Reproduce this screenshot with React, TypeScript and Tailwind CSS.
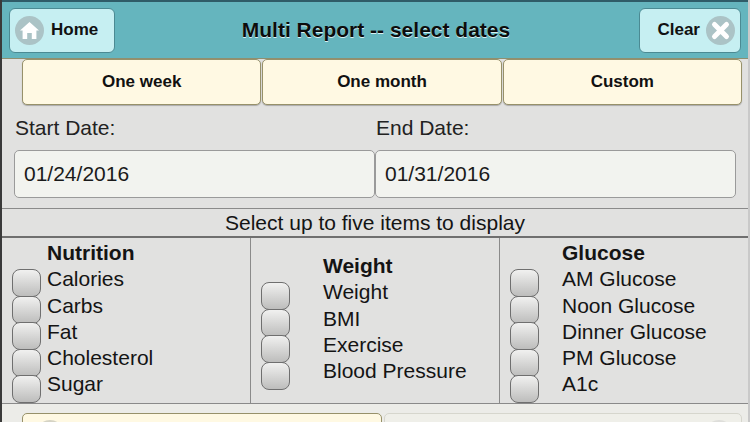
const columns = [
  { title: "Nutrition", items: ["Calories", "Carbs", "Fat", "Cholesterol", "Sugar"], textGap: "ml-[6px]", pad: "pt-[2px]" },
  { title: "Weight", items: ["Weight", "BMI", "Exercise", "Blood Pressure"], textGap: "ml-[33px]", pad: "pt-[15px]" },
  { title: "Glucose", items: ["AM Glucose", "Noon Glucose", "Dinner Glucose", "PM Glucose", "A1c"], textGap: "ml-[23px]", pad: "pt-[2px]" },
];

function HomeIcon() {
  return (
    <svg width="29" height="29" viewBox="0 0 29 29" className="shrink-0">
      <circle cx="14.5" cy="14.5" r="14.5" fill="#abc3c6" />
      <path d="M14.5 6 L24 14.6 L21.4 14.6 L21.4 23 L16.8 23 L16.8 17 L12.2 17 L12.2 23 L7.6 23 L7.6 14.6 L5 14.6 Z" fill="#fff" />
    </svg>
  );
}

function ClearIcon() {
  return (
    <svg width="29" height="29" viewBox="0 0 29 29" className="shrink-0">
      <circle cx="14.5" cy="14.5" r="14.5" fill="#abc3c6" />
      <path d="M8.5 8.5 L20.5 20.5 M20.5 8.5 L8.5 20.5" stroke="#fff" strokeWidth="5" strokeLinecap="round" />
    </svg>
  );
}

function Check() {
  return (
    <div className="-mb-[1.5px] h-[28px] w-[29px] rounded-[8px] border border-[#6f6f6f] bg-gradient-to-b from-[#f1f1f0] to-[#bdbdbc]" />
  );
}

export default function App() {
  return (
    <div className="flex h-[422px] w-[750px] flex-col overflow-hidden border-l-2 border-r-2 border-l-[#3a3a3a] border-r-[#c9c9c9] bg-[#e1e1e0] text-[21px] leading-[26.3px] text-[#141414] [font-family:'Liberation_Sans',Arial,sans-serif]">
      <header className="-mx-[2px] flex h-[59px] shrink-0 items-center justify-between border-t-2 border-b border-t-[#2f5c68] border-b-[#8f8f70] bg-[#65b5be] pl-[9px] pr-[9px]">
        <button className="flex h-[45px] w-[106px] items-center gap-[7px] rounded-[6px] border border-[#4b8a93] bg-[#c6eff2] pl-[5px] text-[17px] font-bold text-[#111]">
          <HomeIcon />
          Home
        </button>
        <h1 className="-ml-[2px] text-[21px] font-bold text-[#0c0c0c] [text-shadow:0_1px_0_#d8f0f2]">Multi Report -- select dates</h1>
        <button className="flex h-[45px] w-[102px] items-center justify-end gap-[6px] rounded-[6px] border border-[#4b8a93] bg-[#c6eff2] pr-[5px] text-[17px] font-bold text-[#111]">
          Clear
          <ClearIcon />
        </button>
      </header>

      <div className="ml-[20px] mr-[6px] grid h-[46px] shrink-0 grid-cols-3 gap-[1px]">
        {["One week", "One month", "Custom"].map((label) => (
          <button key={label} className="rounded-[5px] border border-[#97916a] bg-[#fff9e3] text-[17px] font-bold text-[#111] shadow-[0_1px_1px_#aaa]">
            {label}
          </button>
        ))}
      </div>

      <div className="mt-[9px] grid h-[27px] shrink-0 grid-cols-[361px_1fr] pl-[13px] text-[21px] leading-[27px] text-[#222]">
        <span>Start Date:</span>
        <span>End Date:</span>
      </div>

      <div className="ml-[12px] mr-[12px] mt-[9px] grid h-[48px] shrink-0 grid-cols-2">
        {["01/24/2016", "01/31/2016"].map((date) => (
          <div key={date} className="flex items-center rounded-[5px] border border-[#9a9a9a] bg-[#f2f3ef] pl-[9px] text-[21px] text-[#1a1a1a]">
            {date}
          </div>
        ))}
      </div>

      <div className="mt-[10px] -mr-[2px] flex h-[30px] shrink-0 items-center justify-center border-t border-r-2 border-b-2 border-t-[#8a8a8a] border-r-[#777] border-b-[#6f6f6f] pt-[1px] text-[21px]">
        Select up to five items to display
      </div>

      <div className="-mr-[2px] grid h-[166px] shrink-0 grid-cols-[249px_249px_1fr] border-r-2 border-b border-r-[#777] border-b-[#8a8a8a]">
        {columns.map((col, i) => (
          <div key={col.title} className={`flex pl-[10px] ${col.pad} ${i < 2 ? "border-r border-[#8a8a8a]" : ""}`}>
            <div className="mt-[29px] flex flex-col">
              {col.items.map((item) => (
                <Check key={item} />
              ))}
            </div>
            <div className={col.textGap}>
              <div className="font-bold">{col.title}</div>
              {col.items.map((item) => (
                <div key={item}>{item}</div>
              ))}
            </div>
          </div>
        ))}
      </div>

      <div className="-mx-[2px] grid grow grid-cols-[360px_1fr] gap-[2px] bg-[#ecece8] pl-[22px] pr-[8px] pt-[9px]">
        <div className="h-[46px] rounded-[5px] border border-[#97916a] bg-[#fff9e3] pl-[13px] pt-[6px]">
          <div className="h-[28px] w-[28px] rounded-full bg-[#d5d3c4]" />
        </div>
        <div className="flex h-[46px] justify-end rounded-[5px] border border-[#d6d6cd] bg-[#efefe9] pr-[8px] pt-[6px]">
          <div className="h-[28px] w-[28px] rounded-full bg-[#dededa]" />
        </div>
      </div>
    </div>
  );
}
